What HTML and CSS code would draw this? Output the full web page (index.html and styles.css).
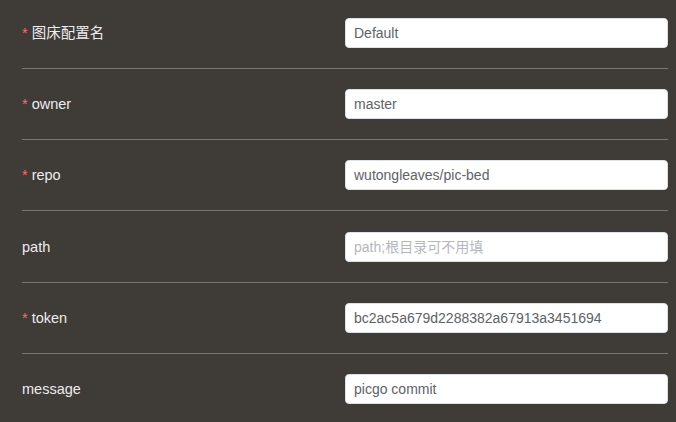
FILE: index.html
```html
<!DOCTYPE html>
<html lang="zh">
<head>
<meta charset="utf-8">
<link rel="stylesheet" href="styles.css">
</head>
<body>
<div class="page">
  <div class="title">GitHub图床设置</div>
  <form class="form">
    <div class="row">
      <label class="label"><span class="req">*</span>图床配置名</label>
      <div class="field"><input class="input" value="Default"></div>
    </div>
    <div class="row">
      <label class="label"><span class="req">*</span>owner</label>
      <div class="field"><input class="input" value="master"></div>
    </div>
    <div class="row">
      <label class="label"><span class="req">*</span>repo</label>
      <div class="field"><input class="input" value="wutongleaves/pic-bed"></div>
    </div>
    <div class="row">
      <label class="label">path</label>
      <div class="field"><input class="input" placeholder="path;根目录可不用填"></div>
    </div>
    <div class="row">
      <label class="label"><span class="req">*</span>token</label>
      <div class="field"><input class="input" value="bc2ac5a679d2288382a67913a3451694"></div>
    </div>
    <div class="row last">
      <label class="label">message</label>
      <div class="field"><input class="input" value="picgo commit"></div>
    </div>
  </form>
</div>
</body>
</html>
```

FILE: styles.css
```css
html, body {
  margin: 0;
  padding: 0;
  background: #3f3b37;
  overflow: hidden;
}
body {
  font-family: "Liberation Sans", Arial, "Noto Sans CJK SC", sans-serif;
  width: 676px;
  height: 422px;
}
.page {
  padding: 0 8px 0 22px;
  margin-top: -25px;
}
.title {
  height: 30px;
  line-height: 30px;
  text-align: center;
  color: #eeeeee;
  font-size: 20px;
  padding-left: 50px;
  margin-bottom: 13px;
}
.form {
  margin: 0;
}
.row {
  display: grid;
  grid-template-columns: 1fr 1fr;
  align-items: center;
  padding: 20.2px 0 20px;
  border-bottom: 1px solid #7a7773;
}
.row:first-child {
  padding-top: 0;
}
.row.last {
  border-bottom: none;
}
.label {
  color: #ececec;
  font-size: 14.5px;
  line-height: 20px;
}
.req {
  color: #f56c6c;
  margin-right: 4px;
}
.field {
  display: flex;
}
.input {
  flex: 1;
  min-width: 0;
  height: 30px;
  box-sizing: border-box;
  border: 1px solid #dcdfe6;
  border-radius: 4px;
  background: #ffffff;
  padding: 0 8px;
  font-family: "Liberation Sans", Arial, "Noto Sans CJK SC", sans-serif;
  font-size: 14px;
  color: #606266;
  outline: none;
}
.input::placeholder {
  color: #b4b7be;
}
```
